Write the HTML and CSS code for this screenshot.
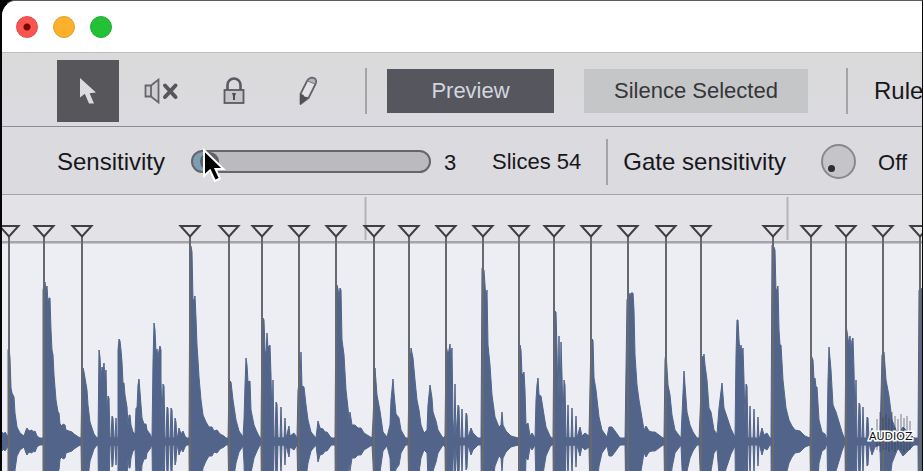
FILE: index.html
```html
<!DOCTYPE html>
<html lang="en">
<head>
    <meta charset="UTF-8">
    <meta name="viewport" content="width=device-width, initial-scale=1.0">
    <title>Slice Editor</title>
    <link rel="stylesheet" href="styles.css">
</head>
<body>
    <div class="window">
        <header class="titlebar">
            <button class="light close" aria-label="Close"></button>
            <button class="light minimize" aria-label="Minimize"></button>
            <button class="light maximize" aria-label="Zoom"></button>
        </header>

        <div class="toolbar">
            <div class="tools">
                <button class="tool active" aria-label="Select">
                    <svg width="32" height="36" viewBox="0 0 32 36">
                        <path d="M8 5 L8 24.5 L12.8 20.8 L17 30.5 L22 30.5 L17.6 20.2 L24 19.5 Z" fill="#dcdce0"/>
                    </svg>
                </button>
                <button class="tool" aria-label="Mute">
                    <svg width="36" height="28" viewBox="0 0 36 28">
                        <path d="M2.5 8.5 H8 V19.5 H2.5 Z M8 8.5 L15.5 2.5 V25.5 L8 19.5" fill="#cfcfd3" stroke="#66676c" stroke-width="1.8"/>
                        <path d="M22 8.5 L32.5 20 M32.5 8.5 L22 20" fill="none" stroke="#56575c" stroke-width="4" stroke-linecap="round"/>
                    </svg>
                </button>
                <button class="tool" aria-label="Lock">
                    <svg width="24" height="28" viewBox="0 0 24 28">
                        <path d="M5.5 13 V8 A6.5 6.5 0 0 1 18.5 8 V13" fill="none" stroke="#5a5b60" stroke-width="2.6"/>
                        <rect x="2.5" y="13" width="19" height="13" fill="#c7c7cb" stroke="#5a5b60" stroke-width="1.8"/>
                        <path d="M10 16 H14 L13 19 V23 H11 V19 Z" fill="#4c4d52"/>
                    </svg>
                </button>
                <button class="tool" aria-label="Draw">
                    <svg width="24" height="32" viewBox="0 0 24 32">
                        <path d="M5.5 19 L12 6 Q15 1.500 19 3 Q22.500 5 20.500 9 L13.500 23 L5.500 29 Z" fill="#e2e2e6" stroke="#606166" stroke-width="1.7" stroke-linejoin="round"/>
                        <path d="M12.500 6 Q15 2 19 3.500 Q22 5.500 20 9 Z" fill="#b3b4b8" stroke="#77787d" stroke-width="1"/>
                        <path d="M5 19 L8 19.500 L9.500 21.500 L13.500 22.500 L5 29.500 Z" fill="#505156"/>
                    </svg>
                </button>
            </div>
            <span class="separator"></span>
            <button class="btn preview">Preview</button>
            <button class="btn silence">Silence Selected</button>
            <span class="separator wide"></span>
            <span class="ruler-label">Rule</span>
        </div>

        <div class="settings">
            <label for="sensitivity">Sensitivity</label>
            <div class="slider-wrap">
                <input class="slider" type="range" id="sensitivity" min="0" max="100" value="3">
                <svg class="cursor" width="24" height="36" viewBox="0 0 24 36">
                    <path d="M2 2 V28 L8 22.500 L13 33 L18 30.500 L13.500 21 H21.500 Z" fill="#000" stroke="#fff" stroke-width="2"/>
                </svg>
            </div>
            <output class="value" for="sensitivity">3</output>
            <span class="slices">Slices 54</span>
            <span class="separator"></span>
            <label class="gate-label" for="gate">Gate sensitivity</label>
            <input class="knob" type="range" id="gate" min="0" max="100" value="0">
            <output class="value off" for="gate">Off</output>
        </div>

        <main class="editor">
            <svg class="wave" width="923" height="276" viewBox="0 195 923 276">
                <defs>
                    <path id="marker" d="M-9.500 226 H9.500 L0 236.500 Z"/>
                    <polygon id="envelope" points="0,442 2,432 4,434 5,432 7,435 8,437 8,350 9,348 10,358 11,388 12,393 14,397 15,413 17,427 20,433 24,436 26,430 27,428 29,431 32,430 33,432 35,431 37,436 42,440
                    43,438 43,290 45,282 46,290 47,286 48,303 49,298 50,298 51,330 52,350 53,355 54,375 56,400 58,412 59,413 60,424 62,426 63,424 65,425 66,430 69,431 72,432 74,434 80,438
                    81,438 82,375 83,368 84,372 85,378 87,390 88,405 90,422 94,434 97,438
                    98,438 99,350 100,357 101,380 102,367 103,370 104,363 105,378 106,370 107,410 108,396 109,398 110,438 111,438 112,416 113,418 114,438 115,438 116,418 117,438
                    118,438 118,350 119,339 120,341 121,350 122,362 123,383 124,383 125,395 127,407 128,425 129,415 130,415 131,425 133,432 135,434 136,408 137,408 138,385 139,379 140,392 141,405 142,418 144,424 146,424 147,430 150,434 152,438
                    153,362 154,323 155,330 156,352 157,349 158,358 159,350 160,346 161,350 161,380 162,420 163,384 164,386 165,440 166,440 167,407 168,408 169,440 170,440 171,408 172,410 173,440 174,440 175,418 176,422 177,440 179,428 181,434 183,431 185,436 188,440
                    189,438 190,246 191,246 192,252 193,300 194,300 195,296 196,318 197,345 198,360 199,377 201,400 203,415 206,422 209,427 212,427 214,431 217,430 220,434 224,436 228,440
                    229,380 231,382 233,400 236,420 239,431 243,437 244,420 245,385 246,358 247,365 248,382 250,381 251,410 254,425 257,432 261,440
                    262,320 263,318 264,320 265,350 266,355 267,333 268,348 269,346 270,345 271,375 272,420 273,380 274,438 275,438 276,402 277,404 278,438 280,438 281,407 282,438 284,438 285,418 286,438 288,430 289,426 290,436 294,433 297,438
                    298,390 300,378 301,352 302,386 304,387 306,405 308,420 311,432 316,438 318,421 320,428 323,429 325,432 327,432 332,439 335,438
                    336,290 337,285 338,289 339,298 340,288 341,290 342,340 344,355 346,390 348,408 349,420 350,412 352,425 355,425 358,428 361,428 364,433 372,438
                    373,420 375,368 377,395 380,411 383,432 387,437 390,425 391,400 393,379 394,393 396,414 399,418 401,430 405,437 408,440
                    409,380 411,348 413,358 415,380 417,400 419,410 421,425 424,433 427,430 428,405 430,385 432,398 433,412 436,421 438,430 443,438
                    445,436 446,345 448,355 449,350 450,344 451,360 452,348 453,420 454,438 455,384 456,438 458,405 459,407 460,440 461,440 462,409 463,440 465,440 466,413 467,415 468,438 471,428 473,433 476,436 480,440
                    481,438 482,268 484,270 485,285 486,300 487,290 488,345 490,365 492,395 495,417 499,427 501,425 502,412 503,425 506,431 511,436 518,438
                    519,440 520,345 521,350 522,375 524,372 525,390 526,425 528,423 530,436 532,433 535,438 536,400 537,385 538,378 539,395 541,396 544,415 546,427 550,436 553,440
                    554,310 556,312 557,350 558,400 559,336 560,400 561,342 562,375 563,420 564,380 565,385 566,438 567,438 568,405 569,438 571,438 572,408 573,438 575,438 576,416 577,438 580,427 582,436 585,433 589,436
                    591,338 593,340 594,378 596,390 599,417 602,430 607,437 609,427 612,427 615,431 620,438 625,440
                    627,300 629,293 630,297 631,293 633,293 634,310 635,355 637,385 639,400 641,412 644,430 646,426 649,431 652,432 655,432 663,438
                    664,440 665,360 666,352 668,385 670,395 672,415 675,430 681,438 682,415 684,371 685,385 687,412 690,425 693,432 699,441
                    701,390 702,356 703,360 704,354 705,365 707,380 709,408 711,412 714,430 717,434 719,408 722,383 724,408 728,420 731,429 735,437
                    736,355 737,320 738,320 739,340 740,352 741,345 742,355 743,348 744,380 745,420 746,384 747,386 748,440 749,440 750,406 751,440 753,440 754,409 755,440 757,440 758,417 759,440 762,428 764,435 767,433 771,440
                    772,245 774,247 775,250 776,292 778,286 779,330 780,345 781,345 783,380 786,408 789,420 792,426 795,430 800,431 805,436 810,438
                    811,355 813,360 814,380 815,378 816,387 817,387 819,420 822,432 825,434 827,440 828,380 829,347 831,370 833,405 836,412 839,422 842,432 845,440
                    846,325 848,338 849,345 850,336 851,350 852,340 853,338 854,370 855,420 856,380 857,440 858,440 859,403 860,405 861,440 862,440 863,407 864,440 866,440 867,417 868,418 869,440 872,428 875,436 880,438
                    882,355 884,352 886,380 889,396 892,420 898,435 903,427 908,432 914,438 918,440 919,290 923,288 923,442"/>
                </defs>

                <!-- ruler -->
                <g class="ticks">
                    <path d="M365.500 197 V240"/>
                    <path d="M787.500 197 V240"/>
                </g>

                <!-- waveform, bottom half is the top half flipped -->
                <g class="shape">
                    <use href="#envelope"/>
                    <use href="#envelope" transform="translate(0 883) scale(1 -1)"/>
                    <rect x="0" y="438" width="923" height="7"/>
                </g>

                <g class="markers" id="markers"></g>

                <g class="watermark">
                    <path d="M877 419 V450 M880 412 V452 M883 417 V450 M886 414 V450 M889 418 V452 M892 412 V450 M895 416 V452 M898 419 V450 M901 414 V450 M904 418 V452 M907 416 V450 M910 421 V450"/>
                    <text x="869" y="440">AUDIOZ</text>
                </g>
            </svg>
        </main>
    </div>

    <script>
        const slices = [9, 44, 82, 190, 229, 262, 299, 336, 374, 409, 446, 483, 519, 554, 591, 628, 666, 701, 773, 811, 846, 883, 920];
        const markers = document.getElementById('markers');

        markers.innerHTML = slices.map(x => `
            <g transform="translate(${x} 0)">
                <path class="slice-line" d="M0 237 V471"/>
                <use href="#marker"/>
            </g>
        `).join('');
    </script>
</body>
</html>
```

FILE: styles.css
```css
* {
    box-sizing: border-box;
}
body {
    margin: 0;
    background-color: #050506;
    font-family: "Liberation Sans", Arial, sans-serif;
    font-size: 22px;
    color: #17171b;
}
button {
    border: 0;
    padding: 0;
    font: inherit;
}
.window {
    display: flex;
    flex-direction: column;
    height: 100vh;
    border: solid #050506;
    border-width: 1px 1px 0 2px;
    border-top-color: #5c5c5e;
    border-radius: 16px 0 0 0;
    overflow: hidden;
    white-space: nowrap;
    background-color: #dbdadf;
}
.titlebar {
    display: flex;
    align-items: center;
    gap: 15px;
    flex: none;
    height: 52px;
    padding-left: 14px;
    background-color: #fff;
    border-bottom: 1px solid #bdbdbe;
}
.light {
    width: 22px;
    height: 22px;
    border-radius: 50%;
}
.close {
    background: radial-gradient(circle, #7c0505 3px, #f9544f 4px);
    border: 1px solid #dc4a47;
}
.minimize {
    background-color: #fdb02a;
    border: 1px solid #dd9e33;
}
.maximize {
    background-color: #22c136;
    border: 1px solid #23a934;
}
.toolbar {
    display: flex;
    align-items: center;
    flex: none;
    height: 74px;
    padding-top: 2px;
    padding-left: 55px;
    border-bottom: 1px solid #8f8e94;
    background: linear-gradient(#dadada, #dbdae0);
}
.tools {
    display: flex;
    gap: 11px;
}
.tool {
    display: flex;
    align-items: center;
    justify-content: center;
    width: 62px;
    height: 62px;
    background: none;
}
.tool.active {
    background-color: #56565b;
}
.separator {
    flex: none;
    width: 2px;
    height: 46px;
    margin-left: 27px;
    background-color: #a4a4a8;
}
.btn {
    flex: none;
    height: 44px;
}
.preview {
    width: 167px;
    margin-left: 20px;
    background-color: #55565e;
    color: #d3d5df;
}
.silence {
    width: 224px;
    margin-left: 30px;
    background-color: #c5c6c8;
    color: #36363a;
}
.separator.wide {
    margin-left: 38px;
}
.ruler-label {
    margin-left: 26px;
    font-size: 24px;
}
.settings {
    display: flex;
    align-items: center;
    flex: none;
    height: 68px;
    padding-top: 2px;
    padding-left: 55px;
    border-bottom: 1px solid #a5a4aa;
}
.settings label {
    font-size: 24px;
}
.slider-wrap {
    position: relative;
    display: flex;
    flex: none;
    width: 240px;
    margin-left: 26px;
}
.slider {
    appearance: none;
    width: 100%;
    height: 23px;
    margin: 0;
    border: 2px solid #65656a;
    border-radius: 12px;
    background: linear-gradient(90deg, #7d9db3 12px, #bbbabf 12px);
    overflow: hidden;
}
.slider::-webkit-slider-thumb {
    appearance: none;
    width: 19px;
    height: 19px;
    border-radius: 50%;
    background-color: #5d6067;
}
.cursor {
    position: absolute;
    left: 11px;
    top: -2px;
}
.value {
    width: 30px;
    margin-left: 13px;
    padding-top: 3px;
}
.slices {
    margin-left: 18px;
}
.settings .separator {
    margin-left: 25px;
}
.gate-label {
    margin-left: 15px;
}
.knob {
    appearance: none;
    flex: none;
    width: 35px;
    height: 35px;
    margin: 0 0 0 35px;
    padding: 14px 5px 0 5px;
    border: 2px solid #88888d;
    border-radius: 50%;
    background-color: #c5c5c9;
}
.knob::-webkit-slider-thumb {
    appearance: none;
    width: 7px;
    height: 7px;
    border-radius: 50%;
    background-color: #2f2f33;
}
.off {
    margin-left: 22px;
}
.editor {
    flex: 1;
    min-height: 0;
    overflow: hidden;
    background: linear-gradient(#e3e2e7 46px, #a5a4a9 46px, #a5a4a9 48px, #c9c8cd 48px, #c9c8cd 49px, #edeef4 49px);
}
.wave {
    display: block;
    margin-left: -2px;
}
.ticks path {
    stroke: #b4b3b8;
    stroke-width: 2;
}
.shape {
    fill: #52648a;
    stroke: #52648a;
    stroke-width: 1;
}
.markers {
    fill: #e3e2e7;
    stroke: #3f3f44;
    stroke-width: 2;
}
.markers .slice-line {
    stroke: #68696f;
}
.watermark path {
    stroke: #2f374c;
    stroke-width: 1;
    opacity: 0.6;
}
.watermark text {
    font-family: "DejaVu Sans", sans-serif;
    font-size: 11px;
    fill: #111;
    stroke: #fff;
    stroke-width: 3;
    paint-order: stroke;
}
```
